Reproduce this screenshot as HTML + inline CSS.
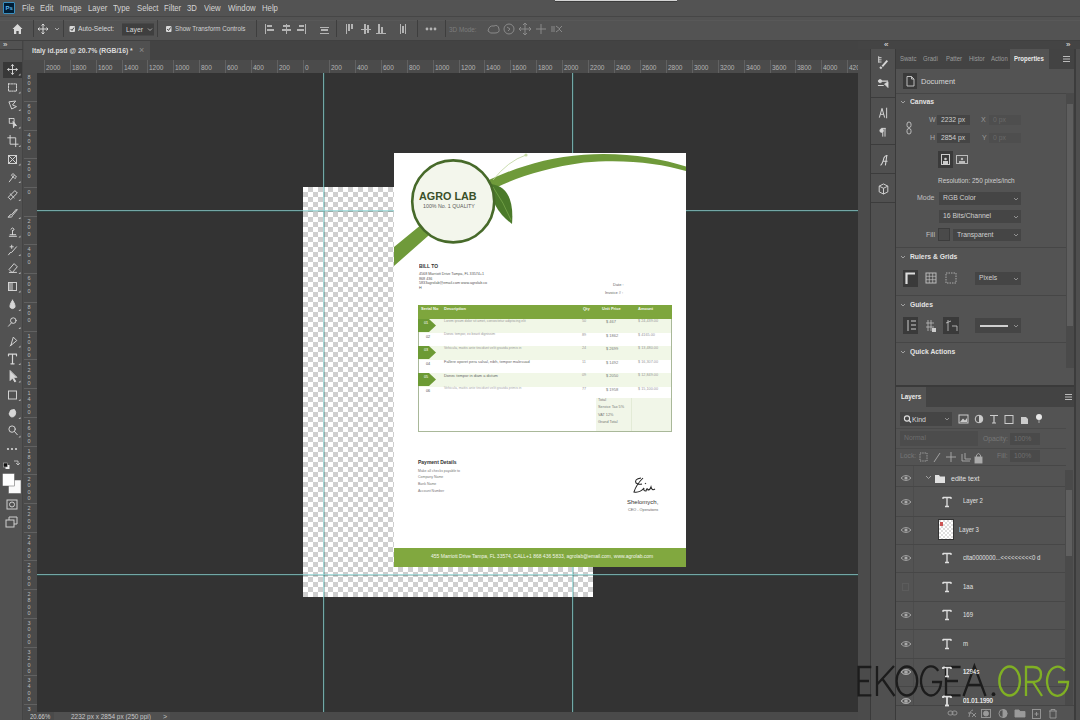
<!DOCTYPE html><html><head><meta charset="utf-8"><style>
*{margin:0;padding:0;box-sizing:border-box}
html,body{width:1080px;height:720px;overflow:hidden;background:#4b4b4b;font-family:"Liberation Sans",sans-serif;color:#d8d8d8}
.a{position:absolute}
.t{position:absolute;white-space:nowrap;line-height:1}
#menubar{left:0;top:0;width:1080px;height:16px;background:#535353}
#menubar span{position:absolute;top:4px;font-size:9px;color:#d4d4d4;line-height:1;transform:scaleX(0.86);transform-origin:0 0}
#optbar{left:0;top:17px;width:1080px;height:23px;background:#535353}
.sep{position:absolute;width:1px;background:#3f3f3f}
#toolbar{left:0;top:41px;width:23px;height:679px;background:#525252;border-right:1px solid #444}
#tabbar{left:24px;top:41px;width:834px;height:19px;background:#434343}
#tab{left:24px;top:41px;width:126px;height:19px;background:#505050}
#rulerT{left:24px;top:60px;width:834px;height:13px;background:#4b4b4b;overflow:hidden}
#rulerL{left:24px;top:73px;width:13px;height:639px;background:#4a4a4a;overflow:hidden}
#canvas{left:37px;top:73px;width:821px;height:639px;background:#333333;overflow:hidden}
#status{left:24px;top:712px;width:834px;height:8px;background:#4a4a4a}
.rl{position:absolute;font-size:6.5px;color:#b4b4b4;top:5px;line-height:1;white-space:nowrap}
.rlv{position:absolute;font-size:5.5px;color:#bdbdbd;left:2px;line-height:6.3px;width:6px;text-align:center}
.rt{position:absolute;background:#616161}
.doc{left:357px;top:80px;width:292px;height:414px;background:#fff;overflow:hidden}
.d{position:absolute;white-space:nowrap;line-height:1}
</style></head><body>
<div id="menubar" class="a">
<div class="a" style="left:3px;top:2px;width:12px;height:12px;background:#001e36;border:1px solid #3a8fbf;border-radius:1px"></div>
<div class="t" style="left:5.5px;top:5px;font-size:6px;font-weight:bold;color:#5fb8f0">Ps</div>
<span style="left:22px">File</span>
<span style="left:40px">Edit</span>
<span style="left:60px">Image</span>
<span style="left:88px">Layer</span>
<span style="left:113px">Type</span>
<span style="left:137px">Select</span>
<span style="left:164px">Filter</span>
<span style="left:187px">3D</span>
<span style="left:204px">View</span>
<span style="left:228px">Window</span>
<span style="left:262px">Help</span>
</div>
<div class="a" style="left:555px;top:0;width:122px;height:1.3px;background:#d4d4d4;box-shadow:0 1px 0 #3c3c3c"></div>
<div class="a" style="left:0;top:16px;width:1080px;height:1.5px;background:#464646"></div>
<div id="optbar" class="a"></div>
<div class="a" style="left:0;top:19.5px;width:1080px;height:1px;background:#585858"></div>
<div class="a" style="left:0;top:40px;width:1080px;height:1px;background:#404040"></div>
<div id="toolbar" class="a"></div>
<svg class="a" style="left:0;top:17px" width="1080" height="23" viewBox="0 17 1080 23">
<g fill="#d9d9d9"><path d="M12.5 29 L17.5 24 L22.5 29 L21 29 L21 34 L18.7 34 L18.7 31 L16.3 31 L16.3 34 L14 34 L14 29 Z"/></g>
<g stroke="#d9d9d9" stroke-width="1" fill="none">
<path d="M43 24 V34 M38 29 H48 M41.5 25.5 L43 24 L44.5 25.5 M41.5 32.5 L43 34 L44.5 32.5 M39.5 27.5 L38 29 L39.5 30.5 M46.5 27.5 L48 29 L46.5 30.5"/>
<path d="M55 28 L57 30 L59 28" stroke="#aaa"/>
</g>
<rect x="69.5" y="26" width="5.5" height="6" rx="1" fill="#d9d9d9"/>
<path d="M70.7 29 L72 30.5 L74 27.5" stroke="#444" stroke-width="1" fill="none"/>
<rect x="122" y="23.5" width="32" height="12" fill="#3f3f3f"/>
<path d="M148 28.5 L150 30.5 L152 28.5" stroke="#aaa" fill="none"/>
<rect x="166" y="26" width="5.5" height="6" rx="1" fill="#d9d9d9"/>
<path d="M167.2 29 L168.5 30.5 L170.5 27.5" stroke="#444" stroke-width="1" fill="none"/>
<g fill="#3e3e3e"><rect x="33" y="20" width="1" height="17"/><rect x="63" y="20" width="1" height="17"/><rect x="157" y="20" width="1" height="17"/><rect x="256" y="20" width="1" height="17"/><rect x="336" y="20" width="1" height="17"/><rect x="417" y="20" width="1" height="17"/><rect x="445" y="20" width="1" height="17"/></g>
<g fill="#b4b4b4">
<rect x="265" y="24" width="1" height="10"/><rect x="267" y="25" width="5" height="2"/><rect x="267" y="29" width="7" height="2"/>
<rect x="286" y="24" width="1" height="10"/><rect x="283" y="25" width="7" height="2"/><rect x="282" y="29" width="9" height="2"/>
<rect x="305" y="24" width="1" height="10"/><rect x="299" y="25" width="5" height="2"/><rect x="297" y="29" width="7" height="2"/>
<rect x="320" y="27" width="9" height="1"/><rect x="321" y="29" width="7" height="2"/><rect x="320" y="33" width="9" height="1"/>
<rect x="346" y="24" width="1" height="10"/><rect x="348" y="24" width="2" height="7"/><rect x="351" y="24" width="2" height="5"/>
<rect x="361" y="29" width="10" height="1"/><rect x="364" y="24" width="2" height="10"/><rect x="367" y="25" width="2" height="8"/>
<rect x="376" y="33" width="10" height="1"/><rect x="378" y="24" width="2" height="9"/><rect x="381" y="27" width="2" height="6"/>
<rect x="400" y="24" width="1" height="10"/><rect x="405" y="24" width="1" height="10"/><rect x="402" y="26" width="2" height="7"/>
<circle cx="427" cy="29" r="1.4"/><circle cx="431" cy="29" r="1.4"/><circle cx="435" cy="29" r="1.4"/>
</g>
<g stroke="#8a8a8a" fill="none" stroke-width="1">
<path d="M488 31 Q489 25 494 26 Q498 24 499 29 Q500 33 495 33 Q490 34 488 31 Z"/>
<circle cx="509" cy="29" r="5"/><path d="M507 27 L510 29 L508 31"/>
<path d="M525 23 L525 35 M519 29 L531 29 M523 25 L525 23 L527 25 M523 33 L525 35 L527 33 M521 27 L519 29 L521 31 M529 27 L531 29 L529 31"/>
<path d="M541 24 L541 34 M536 29 L546 29"/>
<path d="M552 26 L552 32 M554 26 L554 32 M556 26 L560 29 L556 32 M562 26 L559 29 L562 32"/>
</g>
</svg>
<div class="t" style="left:78px;top:25px;font-size:8px;color:#d8d8d8;transform:scaleX(0.83);transform-origin:0 0">Auto-Select:</div>
<div class="t" style="left:126px;top:25.5px;font-size:8px;color:#d8d8d8;transform:scaleX(0.85);transform-origin:0 0">Layer</div>
<div class="t" style="left:175px;top:25px;font-size:8px;color:#d0d0d0;transform:scaleX(0.78);transform-origin:0 0">Show Transform Controls</div>
<div class="t" style="left:449px;top:25.5px;font-size:7.5px;color:#7c7c7c;transform:scaleX(0.85);transform-origin:0 0">3D Mode:</div>
<div id="tabbar" class="a"></div>
<div id="tab" class="a"></div>
<div class="t" style="left:32px;top:47px;font-size:8px;font-weight:bold;color:#dcdcdc;transform:scaleX(0.85);transform-origin:0 0">Italy id.psd @ 20.7% (RGB/16) *</div>
<div class="t" style="left:139px;top:46px;font-size:9px;color:#8c8c8c">&#215;</div>
<div class="t" style="left:3px;top:41px;font-size:8px;color:#e0e0e0;letter-spacing:-1px">&#187;</div>
<div class="a" style="left:0;top:49px;width:23px;height:1px;background:#3d3d3d"></div>
<div class="a" style="left:3px;top:62px;width:19px;height:16px;background:#383838"></div>
<svg class="a" style="left:0;top:50px" width="23" height="490" viewBox="0 50 23 490">
<g stroke="#d6d6d6" stroke-width="1.2" fill="none" stroke-linecap="round">
<g transform="translate(12.5 69.5) scale(0.8) translate(-12 -70)"><path d="M12 64 V76 M6 70 H18 M10.5 65.5 L12 64 L13.5 65.5 M10.5 74.5 L12 76 L13.5 74.5 M7.5 68.5 L6 70 L7.5 71.5 M16.5 68.5 L18 70 L16.5 71.5"/></g>
<g transform="translate(12.5 87.5) scale(0.8) translate(-12 -87.5)"><rect x="7" y="83" width="10" height="9" stroke-dasharray="2 1.3"/></g>
<g transform="translate(12.5 105) scale(0.8) translate(-12 -104)"><path d="M8 100 L16 99 L12 104 L17 106 L11 109 L9 104 Z"/></g>
<g transform="translate(12.5 122.5) scale(0.8) translate(-12 -123)"><rect x="8" y="118" width="6" height="6" stroke-dasharray="1.5 1"/><path d="M13 122 L17 127 L14.5 126.5 L13.5 129 Z" fill="#d6d6d6"/></g>
<g transform="translate(12.5 141) scale(0.8) translate(-12 -142)"><path d="M9 135 V146 H19 M6 138 H16 V149"/></g>
<g transform="translate(12.5 159.5) scale(0.8) translate(-12 -159)"><rect x="7" y="154" width="10" height="10"/><path d="M7 154 L17 164 M17 154 L7 164"/></g>
<g transform="translate(12.5 177) scale(0.8) translate(-12 -177)"><path d="M8 183 L14 175 M13 173 L17 177 L15 179 L11 175 Z"/></g>
<g transform="translate(12.5 195) scale(0.8) translate(-12 -196.5)"><path d="M7 199 L15 191 L18 194 L10 202 Z M9 195 L14 200"/></g>
<g transform="translate(12.5 213) scale(0.8) translate(-12 -214)"><path d="M7 219 Q9 215 11 216 L17 209 L18 210 L12 217 Q12 220 7 219 Z"/></g>
<g transform="translate(12.5 231.5) scale(0.8) translate(-12 -232)"><path d="M9 236 H16 M12 236 V231 M10 229 Q12 226 14 229 Q14 231 12 231 M8 238 H17"/></g>
<g transform="translate(12.5 250) scale(0.8) translate(-12 -249)"><path d="M7 255 Q9 251 11 252 L17 245 M9 245 H13 M11 243 V247"/></g>
<g transform="translate(12.5 268) scale(0.8) translate(-12 -269.5)"><path d="M8 271 L14 264 L18 268 L12 275 Z M8 275 H17"/></g>
<g transform="translate(12.5 286.5) scale(0.8) translate(-12 -286)"><rect x="7" y="281" width="10" height="10"/><rect x="7" y="281" width="5" height="10" fill="#d6d6d6" opacity="0.5"/></g>
<g transform="translate(12.5 305) scale(0.8) translate(-12 -305)"><path d="M12 299 Q8 305 9 308 Q12 311 15 308 Q16 305 12 299 Z" fill="#d6d6d6"/></g>
<g transform="translate(12.5 323) scale(0.8) translate(-12 -323)"><circle cx="13" cy="320" r="3.5"/><path d="M10.5 323 L7 327"/></g>
<g transform="translate(12.5 341.5) scale(0.8) translate(-12 -341.5)"><path d="M10 346 L13 336 L17 340 Z M9 347 L11 345"/></g>
<g transform="translate(12.5 359) scale(0.8) translate(-12 -359)"><path d="M7 353 H17 M12 353 V365 M10 365 H14 M7 353 V355 M17 353 V355" stroke-width="1.5"/></g>
<g transform="translate(12.5 376.5) scale(0.8) translate(-12 -377)"><path d="M9 370 L9 382 L12 379 L15 384 L16 383 L13 378 L17 378 Z" fill="#d6d6d6"/></g>
<g transform="translate(12.5 395) scale(0.8) translate(-12 -394)"><rect x="7" y="389" width="10" height="10"/></g>
<g transform="translate(12.5 413) scale(0.8) translate(-12 -411)"><path d="M8 412 Q9 406 12 407 Q15 405 16 410 Q16 416 11 416 Q8 415 8 412 Z" fill="#d6d6d6"/></g>
<g transform="translate(12.5 431.5) scale(0.8) translate(-12 -432)"><circle cx="11.5" cy="429" r="4"/><path d="M14.5 432 L18 436"/></g>
</g>
<g fill="#bbb"><path d="M18.5 75.5 L20.5 75.5 L20.5 73.5 Z"/><path d="M18.5 93.5 L20.5 93.5 L20.5 91.5 Z"/><path d="M18.5 111 L20.5 111 L20.5 109 Z"/><path d="M18.5 128.5 L20.5 128.5 L20.5 126.5 Z"/><path d="M18.5 147 L20.5 147 L20.5 145 Z"/><path d="M18.5 165.5 L20.5 165.5 L20.5 163.5 Z"/><path d="M18.5 183 L20.5 183 L20.5 181 Z"/><path d="M18.5 201 L20.5 201 L20.5 199 Z"/><path d="M18.5 219 L20.5 219 L20.5 217 Z"/><path d="M18.5 237.5 L20.5 237.5 L20.5 235.5 Z"/><path d="M18.5 256 L20.5 256 L20.5 254 Z"/><path d="M18.5 274 L20.5 274 L20.5 272 Z"/><path d="M18.5 292.5 L20.5 292.5 L20.5 290.5 Z"/><path d="M18.5 311 L20.5 311 L20.5 309 Z"/><path d="M18.5 329 L20.5 329 L20.5 327 Z"/><path d="M18.5 347.5 L20.5 347.5 L20.5 345.5 Z"/><path d="M18.5 365 L20.5 365 L20.5 363 Z"/><path d="M18.5 382.5 L20.5 382.5 L20.5 380.5 Z"/><path d="M18.5 401 L20.5 401 L20.5 399 Z"/><path d="M18.5 419 L20.5 419 L20.5 417 Z"/><path d="M18.5 437.5 L20.5 437.5 L20.5 435.5 Z"/>
</g>
<g fill="#d6d6d6"><circle cx="8" cy="449" r="1.1"/><circle cx="12" cy="449" r="1.1"/><circle cx="16" cy="449" r="1.1"/>
<rect x="5.5" y="465" width="4" height="4" fill="#eee"/><rect x="3.5" y="463" width="4" height="4" fill="#111" stroke="#ccc" stroke-width="0.5"/>
</g>
<path d="M14 461 H18 V465 M16 463 L18 465 L20 463" stroke="#cfcfcf" stroke-width="0.8" fill="none"/>
<rect x="8.5" y="480" width="12.5" height="13.5" fill="#fafafa" stroke="#555" stroke-width="0.5"/>
<rect x="2.5" y="473.5" width="12" height="12.5" fill="#fff" stroke="#555" stroke-width="0.5"/>
<g stroke="#cfcfcf" stroke-width="1" fill="none">
<rect x="7" y="500" width="10" height="9"/><circle cx="12" cy="504.5" r="2.5"/>
<rect x="6" y="520" width="8" height="7"/><path d="M9 520 V517 H17 V524 H14"/>
</g>
</svg>
<div id="rulerT" class="a">
<div class="rt" style="left:20px;top:0;width:1px;height:13px"></div>
<div class="rl" style="left:22px">2000</div>
<div class="rt" style="left:46px;top:0;width:1px;height:13px"></div>
<div class="rl" style="left:48px">1800</div>
<div class="rt" style="left:72px;top:0;width:1px;height:13px"></div>
<div class="rl" style="left:74px">1600</div>
<div class="rt" style="left:98px;top:0;width:1px;height:13px"></div>
<div class="rl" style="left:100px">1400</div>
<div class="rt" style="left:123px;top:0;width:1px;height:13px"></div>
<div class="rl" style="left:125px">1200</div>
<div class="rt" style="left:149px;top:0;width:1px;height:13px"></div>
<div class="rl" style="left:151px">1000</div>
<div class="rt" style="left:175px;top:0;width:1px;height:13px"></div>
<div class="rl" style="left:177px">800</div>
<div class="rt" style="left:201px;top:0;width:1px;height:13px"></div>
<div class="rl" style="left:203px">600</div>
<div class="rt" style="left:227px;top:0;width:1px;height:13px"></div>
<div class="rl" style="left:229px">400</div>
<div class="rt" style="left:253px;top:0;width:1px;height:13px"></div>
<div class="rl" style="left:255px">200</div>
<div class="rt" style="left:279px;top:0;width:1px;height:13px"></div>
<div class="rl" style="left:281px">0</div>
<div class="rt" style="left:305px;top:0;width:1px;height:13px"></div>
<div class="rl" style="left:307px">200</div>
<div class="rt" style="left:331px;top:0;width:1px;height:13px"></div>
<div class="rl" style="left:333px">400</div>
<div class="rt" style="left:357px;top:0;width:1px;height:13px"></div>
<div class="rl" style="left:359px">600</div>
<div class="rt" style="left:383px;top:0;width:1px;height:13px"></div>
<div class="rl" style="left:385px">800</div>
<div class="rt" style="left:409px;top:0;width:1px;height:13px"></div>
<div class="rl" style="left:411px">1000</div>
<div class="rt" style="left:435px;top:0;width:1px;height:13px"></div>
<div class="rl" style="left:437px">1200</div>
<div class="rt" style="left:460px;top:0;width:1px;height:13px"></div>
<div class="rl" style="left:462px">1400</div>
<div class="rt" style="left:486px;top:0;width:1px;height:13px"></div>
<div class="rl" style="left:488px">1600</div>
<div class="rt" style="left:512px;top:0;width:1px;height:13px"></div>
<div class="rl" style="left:514px">1800</div>
<div class="rt" style="left:538px;top:0;width:1px;height:13px"></div>
<div class="rl" style="left:540px">2000</div>
<div class="rt" style="left:564px;top:0;width:1px;height:13px"></div>
<div class="rl" style="left:566px">2200</div>
<div class="rt" style="left:590px;top:0;width:1px;height:13px"></div>
<div class="rl" style="left:592px">2400</div>
<div class="rt" style="left:616px;top:0;width:1px;height:13px"></div>
<div class="rl" style="left:618px">2600</div>
<div class="rt" style="left:642px;top:0;width:1px;height:13px"></div>
<div class="rl" style="left:644px">2800</div>
<div class="rt" style="left:668px;top:0;width:1px;height:13px"></div>
<div class="rl" style="left:670px">3000</div>
<div class="rt" style="left:694px;top:0;width:1px;height:13px"></div>
<div class="rl" style="left:696px">3200</div>
<div class="rt" style="left:720px;top:0;width:1px;height:13px"></div>
<div class="rl" style="left:722px">3400</div>
<div class="rt" style="left:746px;top:0;width:1px;height:13px"></div>
<div class="rl" style="left:748px">3600</div>
<div class="rt" style="left:771px;top:0;width:1px;height:13px"></div>
<div class="rl" style="left:773px">3800</div>
<div class="rt" style="left:797px;top:0;width:1px;height:13px"></div>
<div class="rl" style="left:799px">4000</div>
<div class="rt" style="left:823px;top:0;width:1px;height:13px"></div>
<div class="rl" style="left:825px">4200</div>
</div>
<div id="rulerL" class="a">
<div class="rt" style="left:0;top:-30px;width:13px;height:1px"></div>
<div class="rlv" style="top:-28px">1<br>0<br>0<br>0</div>
<div class="rt" style="left:0;top:-1px;width:13px;height:1px"></div>
<div class="rlv" style="top:1px">8<br>0<br>0</div>
<div class="rt" style="left:0;top:28px;width:13px;height:1px"></div>
<div class="rlv" style="top:30px">6<br>0<br>0</div>
<div class="rt" style="left:0;top:57px;width:13px;height:1px"></div>
<div class="rlv" style="top:59px">4<br>0<br>0</div>
<div class="rt" style="left:0;top:85px;width:13px;height:1px"></div>
<div class="rlv" style="top:87px">2<br>0<br>0</div>
<div class="rt" style="left:0;top:114px;width:13px;height:1px"></div>
<div class="rlv" style="top:116px">0</div>
<div class="rt" style="left:0;top:143px;width:13px;height:1px"></div>
<div class="rlv" style="top:145px">2<br>0<br>0</div>
<div class="rt" style="left:0;top:171px;width:13px;height:1px"></div>
<div class="rlv" style="top:173px">4<br>0<br>0</div>
<div class="rt" style="left:0;top:200px;width:13px;height:1px"></div>
<div class="rlv" style="top:202px">6<br>0<br>0</div>
<div class="rt" style="left:0;top:229px;width:13px;height:1px"></div>
<div class="rlv" style="top:231px">8<br>0<br>0</div>
<div class="rt" style="left:0;top:258px;width:13px;height:1px"></div>
<div class="rlv" style="top:260px">1<br>0<br>0<br>0</div>
<div class="rt" style="left:0;top:286px;width:13px;height:1px"></div>
<div class="rlv" style="top:288px">1<br>2<br>0<br>0</div>
<div class="rt" style="left:0;top:315px;width:13px;height:1px"></div>
<div class="rlv" style="top:317px">1<br>4<br>0<br>0</div>
<div class="rt" style="left:0;top:344px;width:13px;height:1px"></div>
<div class="rlv" style="top:346px">1<br>6<br>0<br>0</div>
<div class="rt" style="left:0;top:373px;width:13px;height:1px"></div>
<div class="rlv" style="top:375px">1<br>8<br>0<br>0</div>
<div class="rt" style="left:0;top:401px;width:13px;height:1px"></div>
<div class="rlv" style="top:403px">2<br>0<br>0<br>0</div>
<div class="rt" style="left:0;top:430px;width:13px;height:1px"></div>
<div class="rlv" style="top:432px">2<br>2<br>0<br>0</div>
<div class="rt" style="left:0;top:459px;width:13px;height:1px"></div>
<div class="rlv" style="top:461px">2<br>4<br>0<br>0</div>
<div class="rt" style="left:0;top:487px;width:13px;height:1px"></div>
<div class="rlv" style="top:489px">2<br>6<br>0<br>0</div>
<div class="rt" style="left:0;top:516px;width:13px;height:1px"></div>
<div class="rlv" style="top:518px">2<br>8<br>0<br>0</div>
<div class="rt" style="left:0;top:545px;width:13px;height:1px"></div>
<div class="rlv" style="top:547px">3<br>0<br>0<br>0</div>
<div class="rt" style="left:0;top:574px;width:13px;height:1px"></div>
<div class="rlv" style="top:576px">3<br>2<br>0<br>0</div>
<div class="rt" style="left:0;top:602px;width:13px;height:1px"></div>
<div class="rlv" style="top:604px">3<br>4<br>0<br>0</div>
<div class="rt" style="left:0;top:631px;width:13px;height:1px"></div>
<div class="rlv" style="top:633px">3<br>6<br>0<br>0</div>
</div>
<div id="canvas" class="a">
<div class="a" style="left:266px;top:114px;width:290px;height:410px;background:repeating-conic-gradient(#cfcfcf 0 25%,#fff 0 50%) 0 0/10px 10px"></div>
<div class="a" style="left:286px;top:0;width:1px;height:639px;background:rgba(140,210,210,0.72);box-shadow:1px 0 0 rgba(40,110,100,0.35)"></div>
<div class="a" style="left:535px;top:0;width:1px;height:639px;background:rgba(140,210,210,0.72);box-shadow:1px 0 0 rgba(40,110,100,0.35)"></div>
<div class="a" style="left:0;top:137px;width:821px;height:1px;background:rgba(140,210,210,0.72);box-shadow:0 1px 0 rgba(40,110,100,0.35)"></div>
<div class="a" style="left:0;top:501px;width:821px;height:1px;background:rgba(140,210,210,0.72);box-shadow:0 1px 0 rgba(40,110,100,0.35)"></div>
<div class="a doc">
<svg class="a" style="left:0;top:0" width="292" height="414" viewBox="0 0 292 414">
<path d="M0 94 L25 73.5 C30 68 96 8 190 1.7 C230 -1 265 5 292 13.5 L292 18 C265 10 230 6 190 9.5 C106 21 60 56 34 83 L0 113 Z" fill="#6f9a3a"/>
<path d="M99 27 Q114 8 132 2" stroke="#bcd49a" stroke-width="0.8" fill="none"/>
<circle cx="132" cy="2" r="1.6" fill="#c9dca8"/>
<path d="M97 31 Q121 34 118 71 Q96 55 97 31 Z" fill="#4b7a2a"/>
<path d="M99 34 Q110 50 117 67" stroke="#86b556" stroke-width="0.6" fill="none"/>
<circle cx="59.2" cy="48.4" r="41" fill="#f3f6ec" stroke="#476a2a" stroke-width="2.6"/>
</svg>
<div class="d" style="left:25px;top:37.5px;font-size:10.8px;font-weight:bold;color:#3a5029">AGRO LAB</div>
<div class="d" style="left:29px;top:51px;font-size:5.3px;color:#5a5a5a">100% No. 1 QUALITY</div>
<div class="d" style="left:25px;top:110px;font-size:6px;font-weight:bold;color:#333;transform:scaleX(0.82);transform-origin:0 0">BILL TO</div>
<div class="d" style="left:25px;top:120.0px;font-size:3.7px;color:#555">4568 Marriott Drive Tampa, FL 33574+1</div>
<div class="d" style="left:25px;top:124.6px;font-size:3.7px;color:#555">868 436</div>
<div class="d" style="left:25px;top:129.2px;font-size:3.7px;color:#555">5833agrolab@email.com www.agrolab.co</div>
<div class="d" style="left:25px;top:133.8px;font-size:3.7px;color:#555">H</div>
<div class="d" style="left:219px;top:130px;font-size:4px;color:#666">Date :</div>
<div class="d" style="left:211px;top:138px;font-size:4px;color:#666">Invoice # :</div>
<div class="a" style="left:24px;top:152px;width:253.5px;height:127px;border:1px solid #a9b899;border-top:none"></div>
<div class="a" style="left:24px;top:152px;width:253.5px;height:14px;background:#7ea63d"></div>
<div class="a" style="left:25px;top:166.0px;width:251.5px;height:13.5px;background:#f1f7e7"></div>
<div class="a" style="left:25px;top:193.0px;width:251.5px;height:13.5px;background:#f1f7e7"></div>
<div class="a" style="left:25px;top:220.0px;width:251.5px;height:13.5px;background:#f1f7e7"></div>
<div class="a" style="left:201.5px;top:245px;width:75px;height:33px;background:#f1f6e8"></div>
<div class="a" style="left:237px;top:245px;width:1px;height:33px;background:#e3ebd6"></div>
<div class="d" style="left:27px;top:154px;font-size:4px;font-weight:bold;color:#f4f8ee">Serial No</div>
<div class="d" style="left:50px;top:154px;font-size:4px;font-weight:bold;color:#f4f8ee">Description</div>
<div class="d" style="left:189px;top:154px;font-size:4px;font-weight:bold;color:#f4f8ee">Qty</div>
<div class="d" style="left:208px;top:154px;font-size:4px;font-weight:bold;color:#f4f8ee">Unit Price</div>
<div class="d" style="left:244px;top:154px;font-size:4px;font-weight:bold;color:#f4f8ee">Amount</div>
<svg class="a" style="left:24px;top:166px" width="20" height="80" viewBox="0 0 20 80"><path d="M0 0 L11 0 L18 6.5 L11 13 L0 13 Z" fill="#6c9a34"/><path d="M0 27 L11 27 L18 33.5 L11 40 L0 40 Z" fill="#6c9a34"/><path d="M0 54 L11 54 L18 60.5 L11 67 L0 67 Z" fill="#6c9a34"/></svg>
<div class="d" style="left:30px;top:168.5px;font-size:3.8px;color:#fff">01</div>
<div class="d" style="left:50px;top:166.8px;font-size:3.4px;color:#9a9a9a">Lorem ipsum dolor sit amet, consectetur adipiscing elit</div>
<div class="d" style="left:188px;top:167.2px;font-size:3.8px;color:#999">50</div>
<div class="d" style="left:212px;top:167.2px;font-size:4px;color:#777">$ 467</div>
<div class="d" style="left:244px;top:167.2px;font-size:3.8px;color:#999">$ 24,439.00</div>
<div class="d" style="left:32px;top:183.0px;font-size:3.8px;color:#555">02</div>
<div class="d" style="left:50px;top:180.3px;font-size:3.4px;color:#9a9a9a">Donec tempor, ex bearit dignissim</div>
<div class="d" style="left:188px;top:180.7px;font-size:3.8px;color:#999">89</div>
<div class="d" style="left:212px;top:180.7px;font-size:4px;color:#777">$ 1862</div>
<div class="d" style="left:244px;top:180.7px;font-size:3.8px;color:#999">$ 4165.00</div>
<div class="d" style="left:30px;top:195.5px;font-size:3.8px;color:#fff">03</div>
<div class="d" style="left:50px;top:193.8px;font-size:3.4px;color:#9a9a9a">Vehicula, mattis ante tincidunt velit gravida primis in</div>
<div class="d" style="left:188px;top:194.2px;font-size:3.8px;color:#999">24</div>
<div class="d" style="left:212px;top:194.2px;font-size:4px;color:#777">$ 2699</div>
<div class="d" style="left:244px;top:194.2px;font-size:3.8px;color:#999">$ 13,480.00</div>
<div class="d" style="left:32px;top:210.0px;font-size:3.8px;color:#555">04</div>
<div class="d" style="left:50px;top:207.3px;font-size:3.9px;color:#666">Fallere oporet pera salsal, nibh, tempor malesuad</div>
<div class="d" style="left:188px;top:207.7px;font-size:3.8px;color:#999">11</div>
<div class="d" style="left:212px;top:207.7px;font-size:4px;color:#777">$ 1492</div>
<div class="d" style="left:244px;top:207.7px;font-size:3.8px;color:#999">$ 16,307.00</div>
<div class="d" style="left:30px;top:222.5px;font-size:3.8px;color:#fff">05</div>
<div class="d" style="left:50px;top:220.8px;font-size:3.9px;color:#666">Donec tempor in diam a dictum</div>
<div class="d" style="left:188px;top:221.2px;font-size:3.8px;color:#999">09</div>
<div class="d" style="left:212px;top:221.2px;font-size:4px;color:#777">$ 2050</div>
<div class="d" style="left:244px;top:221.2px;font-size:3.8px;color:#999">$ 12,849.00</div>
<div class="d" style="left:32px;top:237.0px;font-size:3.8px;color:#555">06</div>
<div class="d" style="left:50px;top:234.3px;font-size:3.4px;color:#aaa">Vehicula, mattis ante tincidunt velit gravida primis in</div>
<div class="d" style="left:188px;top:234.7px;font-size:3.8px;color:#999">77</div>
<div class="d" style="left:212px;top:234.7px;font-size:4px;color:#777">$ 1958</div>
<div class="d" style="left:244px;top:234.7px;font-size:3.8px;color:#999">$ 15,100.00</div>
<div class="d" style="left:204px;top:246.0px;font-size:3.8px;color:#777">Total</div>
<div class="d" style="left:204px;top:253.4px;font-size:3.8px;color:#777">Service Tax 5%</div>
<div class="d" style="left:204px;top:260.8px;font-size:3.8px;color:#777">VAT 12%</div>
<div class="d" style="left:204px;top:268.2px;font-size:3.8px;color:#777">Grand Total</div>
<div class="d" style="left:24px;top:307px;font-size:5px;font-weight:bold;color:#333">Payment Details</div>
<div class="d" style="left:24px;top:316.5px;font-size:3.5px;color:#777">Make all checks payable to</div>
<div class="d" style="left:24px;top:323.2px;font-size:3.5px;color:#777">Company Name</div>
<div class="d" style="left:24px;top:329.9px;font-size:3.5px;color:#777">Bank Name</div>
<div class="d" style="left:24px;top:336.6px;font-size:3.5px;color:#777">Account Number</div>
<svg class="a" style="left:236px;top:322px" width="28" height="22" viewBox="0 0 28 22"><path d="M11 3 Q4 4 6 8 Q9 10 12 9 M13 3 Q6 10 4 17 Q10 18 14 13 Q13 16 16 16 Q17 12 18 15 Q20 15 21 12 Q22 16 25 14 M15 9 L16 8" stroke="#222" stroke-width="1.05" fill="none"/></svg>
<div class="d" style="left:233px;top:346px;font-size:6px;color:#333">Shelomych,</div>
<div class="d" style="left:234px;top:356px;font-size:3.8px;color:#666">CEO - Operations</div>
<div class="a" style="left:0;top:395px;width:292px;height:19px;background:#81a83f"></div>
<div class="d" style="left:37px;top:400.5px;font-size:5px;color:#f1f6ea">455 Marriott Drive Tampa, FL 33574, CALL+1 868 436 5833, agrolab@email.com, www.agrolab.com</div>
</div>
</div>
<div class="a" style="left:858px;top:41px;width:222px;height:679px;background:#4b4b4b"></div>
<div class="a" style="left:858px;top:41px;width:222px;height:8px;background:#444"></div>
<div class="a" style="left:858px;top:49px;width:12px;height:11px;background:#434343"></div>
<div class="a" style="left:870px;top:49px;width:1px;height:671px;background:#3a3a3a"></div>
<div class="a" style="left:895px;top:49px;width:1px;height:671px;background:#3a3a3a"></div>
<div class="a" style="left:1075px;top:49px;width:5px;height:671px;background:#4e4e4e"></div>
<div class="a" style="left:1074px;top:49px;width:1.5px;height:671px;background:#3c3c3c"></div>
<div class="a" style="left:871px;top:49px;width:24px;height:671px;background:#505050"></div>
<div class="a" style="left:871px;top:97px;width:24px;height:1px;background:#3c3c3c"></div>
<div class="a" style="left:871px;top:144px;width:24px;height:1px;background:#3c3c3c"></div>
<div class="a" style="left:871px;top:173px;width:24px;height:1px;background:#3c3c3c"></div>
<div class="a" style="left:871px;top:202px;width:24px;height:1px;background:#3c3c3c"></div>
<div class="t" style="left:884px;top:41px;font-size:8px;color:#e8e8e8;letter-spacing:-1px">&#171;</div>
<div class="t" style="left:1066px;top:41px;font-size:8px;color:#e8e8e8;letter-spacing:-1px">&#187;</div>
<svg class="a" style="left:871px;top:49px" width="24" height="153" viewBox="871 49 24 153">
<g stroke="#d6d6d6" stroke-width="1" fill="none">
<g transform="translate(883 62) scale(0.72) translate(-882 -63)"><path d="M876 57 H880 M876 60 H880 M876 63 H880 M876 55 V64" stroke-width="1.3"/>
<path d="M881 69 L888 61" stroke-width="2.6"/><path d="M880 70 L878 72" stroke-width="3.2"/></g>
<g transform="translate(883 84) scale(0.72) translate(-883 -84)"><path d="M876 80 H890 M876 86 H884" stroke-width="1.5"/>
<circle cx="879" cy="80" r="2.3" fill="#d6d6d6"/><path d="M885 84 L890 81 V89 Z" fill="#d6d6d6"/></g>
<g transform="translate(883 113) scale(0.66) translate(-882.5 -113)"><path d="M877 120 L881 106 L885 120 M878.5 115 H883.5 M888 105 V121" stroke-width="1.5"/></g>
<g transform="translate(883.5 132.5) scale(0.75) translate(-883 -131.5)"><path d="M882 126 V137 M885 126 V137 M880 126 H886" stroke-width="1.3"/><circle cx="880.5" cy="129" r="2.4" fill="#d6d6d6"/></g>
<g transform="translate(884 160.5) scale(0.7) translate(-882 -160)"><path d="M877 167 Q880 165 882 156 Q884 152 887 153 M881 161 H887 M886 153 L884 167" stroke-width="1.5"/></g>
<g transform="translate(883.5 189) scale(0.72) translate(-883 -189)"><path d="M883 182 L889 185 V193 L883 196 L877 193 V185 Z M877 185 L883 188 L889 185 M883 188 V196" stroke-width="1.3"/></g>
</g></svg>
<div class="a" style="left:896px;top:49px;width:178px;height:336px;background:#535353"></div>
<div class="a" style="left:896px;top:49px;width:178px;height:20px;background:#434343"></div>
<div class="a" style="left:1010px;top:49px;width:39px;height:20px;background:#535353"></div>
<div class="t" style="left:900px;top:55px;font-size:7px;color:#9c9c9c;transform:scaleX(0.86);transform-origin:0 0">Swatc</div>
<div class="t" style="left:923px;top:55px;font-size:7px;color:#9c9c9c;transform:scaleX(0.86);transform-origin:0 0">Gradi</div>
<div class="t" style="left:946px;top:55px;font-size:7px;color:#9c9c9c;transform:scaleX(0.86);transform-origin:0 0">Patter</div>
<div class="t" style="left:969px;top:55px;font-size:7px;color:#9c9c9c;transform:scaleX(0.86);transform-origin:0 0">Histor</div>
<div class="t" style="left:991px;top:55px;font-size:7px;color:#9c9c9c;transform:scaleX(0.86);transform-origin:0 0">Action</div>
<div class="t" style="left:1014px;top:55px;font-size:7px;font-weight:bold;color:#ececec;transform:scaleX(0.86);transform-origin:0 0">Properties</div>
<div class="a" style="left:1063px;top:56px;width:7px;height:1.2px;background:#bbb;box-shadow:0 2.5px 0 #bbb,0 5px 0 #bbb"></div>
<div class="a" style="left:903px;top:73px;width:14px;height:16px;background:#3a3a3a"></div>
<svg class="a" style="left:903px;top:73px" width="14" height="16"><path d="M4 3.5 H8.5 L11 6 V13 H4 Z M8.5 3.5 V6 H11" stroke="#ccc" fill="none" stroke-width="0.9"/></svg>
<div class="t" style="left:921px;top:77.5px;font-size:7.5px;color:#d6d6d6">Document</div>
<div class="a" style="left:896px;top:93px;width:170px;height:1px;background:#464646"></div>
<div class="a" style="left:1066px;top:93px;width:8px;height:275px;background:#4a4a4a"></div>
<div class="a" style="left:1067px;top:104px;width:6px;height:222px;background:#5e5e5e"></div>
<svg class="a" style="left:900px;top:99px" width="6" height="6"><path d="M1 2 L3 4 L5 2" stroke="#aaa" fill="none" stroke-width="0.9"/></svg>
<div class="t" style="left:910px;top:98px;font-size:7.5px;font-weight:bold;color:#e4e4e4;transform:scaleX(0.9);transform-origin:0 0">Canvas</div>
<div class="t" style="left:929px;top:116px;font-size:7px;color:#aaa">W</div>
<div class="t" style="left:930px;top:134px;font-size:7px;color:#aaa">H</div>
<div class="t" style="left:981px;top:116px;font-size:7px;color:#999">X</div>
<div class="t" style="left:982px;top:134px;font-size:7px;color:#999">Y</div>
<div class="a" style="left:937px;top:115px;width:33px;height:10px;background:#454545"></div>
<div class="t" style="left:941px;top:116.5px;font-size:6.8px;color:#d0d0d0">2232 px</div>
<div class="a" style="left:937px;top:133px;width:33px;height:10px;background:#454545"></div>
<div class="t" style="left:941px;top:134.5px;font-size:6.8px;color:#d0d0d0">2854 px</div>
<div class="a" style="left:989px;top:115px;width:32px;height:10px;background:#4e4e4e"></div>
<div class="t" style="left:993px;top:116.5px;font-size:6.8px;color:#6a6a6a">0 px</div>
<div class="a" style="left:989px;top:133px;width:32px;height:10px;background:#4e4e4e"></div>
<div class="t" style="left:993px;top:134.5px;font-size:6.8px;color:#6a6a6a">0 px</div>
<svg class="a" style="left:905px;top:121px" width="8" height="14"><rect x="2" y="1" width="4" height="5.5" rx="2" stroke="#bbb" fill="none"/><rect x="2" y="7.5" width="4" height="5.5" rx="2" stroke="#bbb" fill="none"/></svg>
<div class="a" style="left:938px;top:151px;width:15px;height:17px;background:#3a3a3a"></div>
<svg class="a" style="left:938px;top:151px" width="32" height="17"><rect x="3.5" y="3.5" width="8" height="10" stroke="#ccc" fill="none"/><path d="M5 13 V10 H10 V13 Z" fill="#ccc"/><circle cx="7.5" cy="8" r="1.3" fill="#ccc"/><rect x="18.5" y="4.5" width="11" height="8" stroke="#bbb" fill="none"/><path d="M21 12 V10 H27 V12 Z" fill="#bbb"/><circle cx="24" cy="8" r="1.2" fill="#bbb"/></svg>
<div class="t" style="left:938px;top:176.5px;font-size:7px;color:#cfcfcf;transform:scaleX(0.92);transform-origin:0 0">Resolution: 250 pixels/inch</div>
<div class="t" style="left:917px;top:194px;font-size:7px;color:#c0c0c0">Mode</div>
<div class="a" style="left:939px;top:192px;width:82px;height:13px;background:#454545"></div>
<div class="t" style="left:943px;top:195.0px;font-size:6.8px;color:#d0d0d0">RGB Color</div>
<svg class="a" style="left:1013px;top:196.5px" width="6" height="5"><path d="M1 1 L3 3 L5 1" stroke="#999" fill="none" stroke-width="0.9"/></svg>
<div class="a" style="left:939px;top:210px;width:82px;height:13px;background:#454545"></div>
<div class="t" style="left:943px;top:213.0px;font-size:6.8px;color:#d0d0d0">16 Bits/Channel</div>
<svg class="a" style="left:1013px;top:214.5px" width="6" height="5"><path d="M1 1 L3 3 L5 1" stroke="#999" fill="none" stroke-width="0.9"/></svg>
<div class="t" style="left:926px;top:231px;font-size:7px;color:#c0c0c0">Fill</div>
<div class="a" style="left:938px;top:228px;width:12px;height:13px;background:#4a4a4a;border:1px solid #3c3c3c"></div>
<div class="a" style="left:953px;top:229px;width:68px;height:12px;background:#454545"></div>
<div class="t" style="left:957px;top:231.5px;font-size:6.8px;color:#d0d0d0">Transparent</div>
<svg class="a" style="left:1013px;top:233.0px" width="6" height="5"><path d="M1 1 L3 3 L5 1" stroke="#999" fill="none" stroke-width="0.9"/></svg>
<div class="a" style="left:896px;top:247px;width:170px;height:1px;background:#464646"></div>
<svg class="a" style="left:900px;top:254px" width="6" height="6"><path d="M1 2 L3 4 L5 2" stroke="#aaa" fill="none" stroke-width="0.9"/></svg>
<div class="t" style="left:910px;top:253px;font-size:7.5px;font-weight:bold;color:#e4e4e4;transform:scaleX(0.9);transform-origin:0 0">Rulers &amp; Grids</div>
<div class="a" style="left:903px;top:270px;width:15px;height:17px;background:#3a3a3a"></div>
<svg class="a" style="left:903px;top:270px" width="60" height="17"><path d="M3.5 14 V3.5 H12" stroke="#ddd" stroke-width="2.2" fill="none"/><rect x="23" y="3" width="10" height="10" stroke="#bbb" fill="none"/><path d="M26.3 3 V13 M29.7 3 V13 M23 6.3 H33 M23 9.7 H33" stroke="#bbb" stroke-width="0.7"/><rect x="43" y="3" width="10" height="10" stroke="#aaa" fill="none" stroke-dasharray="1.5 1"/></svg>
<div class="a" style="left:975px;top:272px;width:46px;height:13px;background:#454545"></div>
<div class="t" style="left:979px;top:275.0px;font-size:6.8px;color:#d0d0d0">Pixels</div>
<svg class="a" style="left:1013px;top:276.5px" width="6" height="5"><path d="M1 1 L3 3 L5 1" stroke="#999" fill="none" stroke-width="0.9"/></svg>
<div class="a" style="left:896px;top:295px;width:170px;height:1px;background:#464646"></div>
<svg class="a" style="left:900px;top:302px" width="6" height="6"><path d="M1 2 L3 4 L5 2" stroke="#aaa" fill="none" stroke-width="0.9"/></svg>
<div class="t" style="left:910px;top:301px;font-size:7.5px;font-weight:bold;color:#e4e4e4;transform:scaleX(0.9);transform-origin:0 0">Guides</div>
<div class="a" style="left:903px;top:317px;width:15px;height:17px;background:#3a3a3a"></div>
<div class="a" style="left:943px;top:317px;width:16px;height:17px;background:#3a3a3a"></div>
<svg class="a" style="left:903px;top:317px" width="60" height="17"><path d="M5 3 V14 M8 4 H13 M8 8 H13 M8 12 H13" stroke="#ccc" fill="none"/><path d="M25 3 V14 M28 3 V14 M23 6 H31 M23 10 H31" stroke="#bbb" fill="none" stroke-width="0.8"/><rect x="29" y="11" width="4" height="4" fill="#ccc"/><path d="M45 3 V14 M43 6 L48 4 M49 9 H54 V14" stroke="#ccc" fill="none" stroke-width="0.8"/></svg>
<div class="a" style="left:975px;top:318px;width:46px;height:15px;background:#454545"></div>
<svg class="a" style="left:1013px;top:323.5px" width="6" height="5"><path d="M1 1 L3 3 L5 1" stroke="#999" fill="none" stroke-width="0.9"/></svg>
<div class="a" style="left:980px;top:325px;width:28px;height:1.5px;background:#cfcfcf"></div>
<div class="a" style="left:896px;top:342px;width:170px;height:1px;background:#464646"></div>
<svg class="a" style="left:900px;top:349px" width="6" height="6"><path d="M1 2 L3 4 L5 2" stroke="#aaa" fill="none" stroke-width="0.9"/></svg>
<div class="t" style="left:910px;top:348px;font-size:7.5px;font-weight:bold;color:#e4e4e4;transform:scaleX(0.9);transform-origin:0 0">Quick Actions</div>
<div class="a" style="left:896px;top:385px;width:178px;height:2px;background:#3a3a3a"></div>
<div class="a" style="left:896px;top:387px;width:178px;height:333px;background:#535353"></div>
<div class="a" style="left:896px;top:387px;width:178px;height:20px;background:#434343"></div>
<div class="a" style="left:896px;top:387px;width:30px;height:20px;background:#535353"></div>
<div class="t" style="left:901px;top:393px;font-size:7px;font-weight:bold;color:#ececec;transform:scaleX(0.9);transform-origin:0 0">Layers</div>
<div class="a" style="left:1065px;top:394px;width:7px;height:1.2px;background:#bbb;box-shadow:0 2.5px 0 #bbb,0 5px 0 #bbb"></div>
<div class="a" style="left:900px;top:412px;width:52px;height:14px;background:#454545"></div>
<svg class="a" style="left:944px;top:417.0px" width="6" height="5"><path d="M1 1 L3 3 L5 1" stroke="#999" fill="none" stroke-width="0.9"/></svg>
<div class="t" style="left:912px;top:415.5px;font-size:7px;color:#d8d8d8">Kind</div>
<svg class="a" style="left:900px;top:412px" width="150" height="14"><circle cx="7" cy="6.5" r="2.6" stroke="#ddd" fill="none" stroke-width="1.1"/><path d="M9 8.5 L11 10.5" stroke="#ddd" stroke-width="1.2"/><rect x="59" y="3" width="9" height="8" stroke="#ccc" fill="none"/><path d="M60 10 L63 6.5 L65 8.5 L67 6 V10 Z" fill="#ccc"/><circle cx="79" cy="7" r="3.8" stroke="#ccc" fill="none"/><path d="M79 3.2 A3.8 3.8 0 0 1 79 10.8 Z" fill="#ccc"/><path d="M90 3.5 H98 M94 3.5 V11 M92 11 H96" stroke="#ccc" stroke-width="1.2"/><rect x="105" y="3.5" width="8" height="8" stroke="#ccc" fill="none"/><path d="M121 5 H126 L128 7 V12 H121 Z" fill="#ccc"/><circle cx="139" cy="5" r="3" fill="#e8e8e8"/><path d="M139 8 V11" stroke="#aaa"/></svg>
<div class="a" style="left:896px;top:428px;width:170px;height:1px;background:#4a4a4a"></div>
<div class="a" style="left:900px;top:431px;width:78px;height:15px;background:#4c4c4c"></div>
<div class="t" style="left:904px;top:435.0px;font-size:6.8px;color:#6e6e6e">Normal</div>
<div class="t" style="left:983px;top:435.5px;font-size:6.8px;color:#777">Opacity:</div>
<div class="a" style="left:1010px;top:433px;width:30px;height:12px;background:#4a4a4a"></div>
<div class="t" style="left:1014px;top:435.5px;font-size:6.8px;color:#6e6e6e">100%</div>
<div class="a" style="left:896px;top:448px;width:170px;height:1px;background:#4a4a4a"></div>
<div class="t" style="left:900px;top:453px;font-size:6.8px;color:#777">Lock:</div>
<svg class="a" style="left:918px;top:449px" width="70" height="16"><g stroke="#aaa" fill="none" stroke-width="0.9"><rect x="2" y="4" width="7" height="8" stroke-dasharray="1.3 1"/><path d="M16 13 L22 4"/><path d="M33 3 V13 M28 8 H38"/><path d="M44 5 V12 H52 M47 4 V10 H53"/><rect x="57" y="8" width="7" height="6" fill="#aaa"/><path d="M58.5 8 V6 Q60.5 3 62.5 6 V8"/></g></svg>
<div class="t" style="left:997px;top:453px;font-size:6.8px;color:#777">Fill:</div>
<div class="a" style="left:1010px;top:450px;width:30px;height:12px;background:#4a4a4a"></div>
<div class="t" style="left:1014px;top:452.5px;font-size:6.8px;color:#6e6e6e">100%</div>
<div class="a" style="left:896px;top:465px;width:170px;height:1px;background:#474747"></div>
<div class="a" style="left:1065px;top:470px;width:8px;height:235px;background:#4a4a4a"></div>
<div class="a" style="left:1066px;top:490px;width:6px;height:66px;background:#5f5f5f"></div>
<div class="a" style="left:913px;top:466px;width:1px;height:239px;background:#4c4c4c"></div>
<div class="a" style="left:896px;top:486px;width:169px;height:1px;background:#474747"></div>
<svg class="a" style="left:900px;top:474px" width="12" height="8"><path d="M1 4 Q6 -1 11 4 Q6 9 1 4 Z" stroke="#aaa" fill="none" stroke-width="0.9"/><circle cx="6" cy="4" r="1.6" fill="#aaa"/></svg>
<svg class="a" style="left:925px;top:473px" width="22" height="12"><path d="M1 3 L3.5 5.5 L6 3" stroke="#aaa" fill="none" stroke-width="0.9"/><path d="M10 2 H14 L15 3.5 H20 V10 H10 Z" fill="#e0e0e0"/></svg>
<div class="t" style="left:951px;top:474.5px;font-size:7px;color:#e0e0e0">edite text</div>
<svg class="a" style="left:900px;top:497.5px" width="12" height="8"><path d="M1 4 Q6 -1 11 4 Q6 9 1 4 Z" stroke="#aaa" fill="none" stroke-width="0.9"/><circle cx="6" cy="4" r="1.6" fill="#aaa"/></svg>
<svg class="a" style="left:942px;top:495.5px" width="10" height="12"><path d="M1 1.5 H9 M1 1 V3 M9 1 V3 M5 1.5 V10.5 M3 10.5 H7" stroke="#e0e0e0" stroke-width="1.3" fill="none"/></svg>
<div class="t" style="left:963px;top:498.0px;font-size:6.8px;color:#e0e0e0;transform:scaleX(0.88);transform-origin:0 0">Layer 2</div>
<div class="a" style="left:896px;top:515.5px;width:169px;height:1px;background:#474747"></div>
<svg class="a" style="left:900px;top:526px" width="12" height="8"><path d="M1 4 Q6 -1 11 4 Q6 9 1 4 Z" stroke="#aaa" fill="none" stroke-width="0.9"/><circle cx="6" cy="4" r="1.6" fill="#aaa"/></svg>
<div class="a" style="left:938px;top:519px;width:16px;height:21px;background:repeating-conic-gradient(#fff 0 25%,#ddd 0 50%) 0 0/4px 4px;border:1px solid #333"></div>
<div class="a" style="left:940px;top:522px;width:3px;height:4px;background:#c55"></div>
<div class="t" style="left:959px;top:526.5px;font-size:6.8px;color:#e0e0e0;transform:scaleX(0.88);transform-origin:0 0">Layer 3</div>
<div class="a" style="left:896px;top:544px;width:169px;height:1px;background:#474747"></div>
<svg class="a" style="left:900px;top:554px" width="12" height="8"><path d="M1 4 Q6 -1 11 4 Q6 9 1 4 Z" stroke="#aaa" fill="none" stroke-width="0.9"/><circle cx="6" cy="4" r="1.6" fill="#aaa"/></svg>
<svg class="a" style="left:942px;top:552px" width="10" height="12"><path d="M1 1.5 H9 M1 1 V3 M9 1 V3 M5 1.5 V10.5 M3 10.5 H7" stroke="#e0e0e0" stroke-width="1.3" fill="none"/></svg>
<div class="t" style="left:963px;top:554.5px;font-size:6.8px;color:#e0e0e0;transform:scaleX(0.88);transform-origin:0 0">cita0000000...&lt;&lt;&lt;&lt;&lt;&lt;&lt;&lt;&lt;0 d</div>
<div class="a" style="left:896px;top:572px;width:169px;height:1px;background:#474747"></div>
<div class="a" style="left:902px;top:583px;width:7px;height:8px;border:1px solid #5c5c5c"></div>
<svg class="a" style="left:942px;top:581px" width="10" height="12"><path d="M1 1.5 H9 M1 1 V3 M9 1 V3 M5 1.5 V10.5 M3 10.5 H7" stroke="#e0e0e0" stroke-width="1.3" fill="none"/></svg>
<div class="t" style="left:963px;top:583.5px;font-size:6.8px;color:#e0e0e0;transform:scaleX(0.88);transform-origin:0 0">1aa</div>
<div class="a" style="left:896px;top:601px;width:169px;height:1px;background:#474747"></div>
<svg class="a" style="left:900px;top:611px" width="12" height="8"><path d="M1 4 Q6 -1 11 4 Q6 9 1 4 Z" stroke="#aaa" fill="none" stroke-width="0.9"/><circle cx="6" cy="4" r="1.6" fill="#aaa"/></svg>
<svg class="a" style="left:942px;top:609px" width="10" height="12"><path d="M1 1.5 H9 M1 1 V3 M9 1 V3 M5 1.5 V10.5 M3 10.5 H7" stroke="#e0e0e0" stroke-width="1.3" fill="none"/></svg>
<div class="t" style="left:963px;top:611.5px;font-size:6.8px;color:#e0e0e0;transform:scaleX(0.88);transform-origin:0 0">169</div>
<div class="a" style="left:896px;top:629px;width:169px;height:1px;background:#474747"></div>
<svg class="a" style="left:900px;top:640px" width="12" height="8"><path d="M1 4 Q6 -1 11 4 Q6 9 1 4 Z" stroke="#aaa" fill="none" stroke-width="0.9"/><circle cx="6" cy="4" r="1.6" fill="#aaa"/></svg>
<svg class="a" style="left:942px;top:638px" width="10" height="12"><path d="M1 1.5 H9 M1 1 V3 M9 1 V3 M5 1.5 V10.5 M3 10.5 H7" stroke="#e0e0e0" stroke-width="1.3" fill="none"/></svg>
<div class="t" style="left:963px;top:640.5px;font-size:6.8px;color:#e0e0e0;transform:scaleX(0.88);transform-origin:0 0">m</div>
<div class="a" style="left:896px;top:658px;width:169px;height:1px;background:#474747"></div>
<svg class="a" style="left:900px;top:668px" width="12" height="8"><path d="M1 4 Q6 -1 11 4 Q6 9 1 4 Z" stroke="#aaa" fill="none" stroke-width="0.9"/><circle cx="6" cy="4" r="1.6" fill="#aaa"/></svg>
<svg class="a" style="left:942px;top:666px" width="10" height="12"><path d="M1 1.5 H9 M1 1 V3 M9 1 V3 M5 1.5 V10.5 M3 10.5 H7" stroke="#e0e0e0" stroke-width="1.3" fill="none"/></svg>
<div class="t" style="left:963px;top:668.5px;font-size:6.8px;color:#e0e0e0;transform:scaleX(0.88);transform-origin:0 0">1294s</div>
<div class="a" style="left:896px;top:686px;width:169px;height:1px;background:#474747"></div>
<svg class="a" style="left:900px;top:697px" width="12" height="8"><path d="M1 4 Q6 -1 11 4 Q6 9 1 4 Z" stroke="#aaa" fill="none" stroke-width="0.9"/><circle cx="6" cy="4" r="1.6" fill="#aaa"/></svg>
<svg class="a" style="left:942px;top:695px" width="10" height="12"><path d="M1 1.5 H9 M1 1 V3 M9 1 V3 M5 1.5 V10.5 M3 10.5 H7" stroke="#e0e0e0" stroke-width="1.3" fill="none"/></svg>
<div class="t" style="left:963px;top:697.5px;font-size:6.8px;color:#e0e0e0;transform:scaleX(0.88);transform-origin:0 0">01.01.1990</div>
<div class="a" style="left:896px;top:705px;width:178px;height:1px;background:#444"></div>
<svg class="a" style="left:940px;top:706px" width="125" height="14" viewBox="940 706 125 14"><g stroke="#9a9a9a" fill="none" stroke-width="0.9">
<rect x="948" y="711" width="5" height="4" rx="2"/><rect x="952" y="711" width="5" height="4" rx="2"/>
<path d="M969 717 Q970 710 973 710 M968 713 H972 M972 713 L976 717 M976 713 L972 717"/>
<rect x="981.5" y="709.5" width="9" height="8"/><circle cx="986" cy="713.5" r="2.5" fill="#9a9a9a"/>
<circle cx="1003" cy="713.5" r="4"/><path d="M1003 709.5 A4 4 0 0 1 1003 717.5 Z" fill="#9a9a9a"/>
<path d="M1015 710 H1019 L1020 711.5 H1025 V717 H1015 Z" fill="#9a9a9a"/>
<rect x="1032.5" y="709.5" width="8" height="9"/><path d="M1034.5 714 H1038.5 M1036.5 712 V716"/>
<path d="M1049 711 H1057 M1051 711 V709.5 H1055 V711 M1050 711 V718 H1056 V711"/>
</g></svg>
<div id="status" class="a"></div>
<div class="t" style="left:30px;top:713px;font-size:7px;color:#cfcfcf;transform:scaleX(0.85);transform-origin:0 0">20.66%</div>
<div class="a" style="left:54px;top:712px;width:116px;height:8px;background:#505050"></div>
<div class="t" style="left:71px;top:713px;font-size:7px;color:#c8c8c8;transform:scaleX(0.92);transform-origin:0 0">2232 px x 2854 px (250 ppi)</div>
<div class="t" style="left:163px;top:713px;font-size:7px;color:#c8c8c8">&gt;</div>
<svg class="a" style="left:850px;top:655px" width="230" height="50" viewBox="850 655 230 50">
<g stroke="#1c1c1c" stroke-width="2.3" fill="none">
<path d="M871.3 667 H858.6 V695.4 H871.3 M858.6 681 H869"/>
<path d="M877 666 V696 M894 666 L877.5 684 M882.5 679 L894.5 696"/>
<ellipse cx="906.9" cy="681" rx="10.3" ry="14.5"/>
<path d="M938.2 670.8 A10 14.5 0 1 0 941 682 H932"/>
<path d="M960.6 667 H946 V695.4 H960.6 M946 681 H958"/>
<path d="M963.5 696 L974.4 666 L985.5 696 M967.5 685 H981.5"/>
</g>
<circle cx="993.5" cy="694.2" r="1.9" fill="#1c1c1c"/>
<g stroke="#80b024" stroke-width="2.3" fill="none">
<ellipse cx="1009.6" cy="681" rx="10.3" ry="14.5"/>
<path d="M1026 696 V667 H1033 Q1041 667 1041 674.5 Q1041 682 1033 682 H1026 M1033 682 L1042 696"/>
<path d="M1064.8 670.8 A10.5 14.5 0 1 0 1068 682 H1058"/>
</g></svg>
<svg class="a" style="left:900px;top:668px" width="12" height="8"><path d="M1 4 Q6 -1 11 4 Q6 9 1 4 Z" stroke="#aaa" fill="none" stroke-width="0.9"/><circle cx="6" cy="4" r="1.6" fill="#aaa"/></svg>
<svg class="a" style="left:942px;top:666px" width="10" height="12"><path d="M1 1.5 H9 M1 1 V3 M9 1 V3 M5 1.5 V10.5 M3 10.5 H7" stroke="#e0e0e0" stroke-width="1.3" fill="none"/></svg>
<div class="t" style="left:963px;top:668.5px;font-size:6.8px;color:#e0e0e0;transform:scaleX(0.88);transform-origin:0 0">1294s</div>
<svg class="a" style="left:900px;top:697px" width="12" height="8"><path d="M1 4 Q6 -1 11 4 Q6 9 1 4 Z" stroke="#aaa" fill="none" stroke-width="0.9"/><circle cx="6" cy="4" r="1.6" fill="#aaa"/></svg>
<svg class="a" style="left:942px;top:695px" width="10" height="12"><path d="M1 1.5 H9 M1 1 V3 M9 1 V3 M5 1.5 V10.5 M3 10.5 H7" stroke="#e0e0e0" stroke-width="1.3" fill="none"/></svg>
<div class="t" style="left:963px;top:697.5px;font-size:6.8px;color:#e0e0e0;transform:scaleX(0.88);transform-origin:0 0">01.01.1990</div>
</body></html>
